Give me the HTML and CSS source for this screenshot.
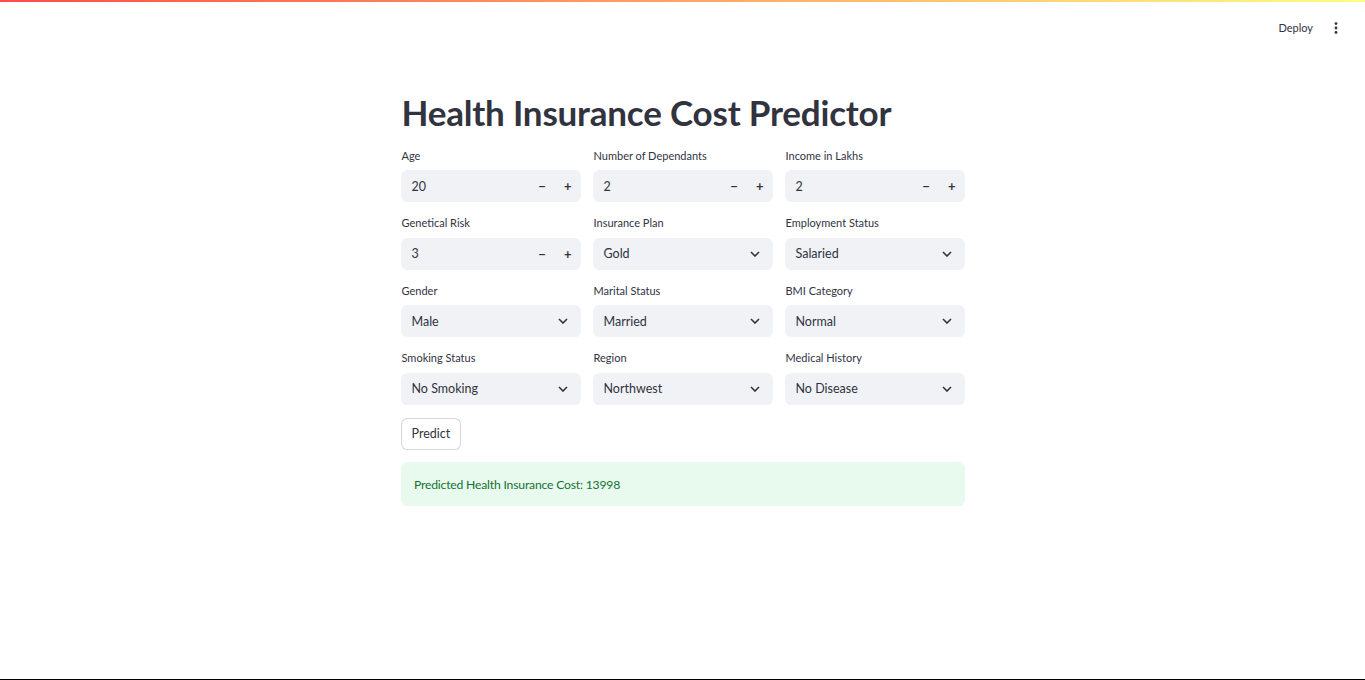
FILE: index.html
```html
<!DOCTYPE html>
<html lang="en">
<head>
<meta charset="utf-8">
<title>Health Insurance Cost Predictor</title>
<link rel="stylesheet" href="styles.css">
</head>
<body>
<div class="decoration"></div>
<header class="topbar">
  <button class="deploy">Deploy</button>
  <button class="menu" aria-label="Main menu">
    <svg width="4" height="12" viewBox="0 0 4 12"><circle cx="2" cy="1.6" r="1.4"/><circle cx="2" cy="6" r="1.4"/><circle cx="2" cy="10.4" r="1.4"/></svg>
  </button>
</header>
<main class="main">
  <h1 class="title">Health Insurance Cost Predictor</h1>
  <div class="grid">
    <div class="field">
      <label class="label">Age</label>
      <div class="box number"><span class="value">20</span><span class="step">&minus;</span><span class="step plus">+</span></div>
    </div>
    <div class="field">
      <label class="label">Number of Dependants</label>
      <div class="box number"><span class="value">2</span><span class="step">&minus;</span><span class="step plus">+</span></div>
    </div>
    <div class="field">
      <label class="label">Income in Lakhs</label>
      <div class="box number"><span class="value">2</span><span class="step">&minus;</span><span class="step plus">+</span></div>
    </div>

    <div class="field">
      <label class="label">Genetical Risk</label>
      <div class="box number"><span class="value">3</span><span class="step">&minus;</span><span class="step plus">+</span></div>
    </div>
    <div class="field">
      <label class="label">Insurance Plan</label>
      <div class="box select"><span class="value">Gold</span><svg class="chev" width="10" height="6" viewBox="0 0 10 6"><path d="M1 1l4 4 4-4"/></svg></div>
    </div>
    <div class="field">
      <label class="label">Employment Status</label>
      <div class="box select"><span class="value">Salaried</span><svg class="chev" width="10" height="6" viewBox="0 0 10 6"><path d="M1 1l4 4 4-4"/></svg></div>
    </div>

    <div class="field">
      <label class="label">Gender</label>
      <div class="box select"><span class="value">Male</span><svg class="chev" width="10" height="6" viewBox="0 0 10 6"><path d="M1 1l4 4 4-4"/></svg></div>
    </div>
    <div class="field">
      <label class="label">Marital Status</label>
      <div class="box select"><span class="value">Married</span><svg class="chev" width="10" height="6" viewBox="0 0 10 6"><path d="M1 1l4 4 4-4"/></svg></div>
    </div>
    <div class="field">
      <label class="label">BMI Category</label>
      <div class="box select"><span class="value">Normal</span><svg class="chev" width="10" height="6" viewBox="0 0 10 6"><path d="M1 1l4 4 4-4"/></svg></div>
    </div>

    <div class="field">
      <label class="label">Smoking Status</label>
      <div class="box select"><span class="value">No Smoking</span><svg class="chev" width="10" height="6" viewBox="0 0 10 6"><path d="M1 1l4 4 4-4"/></svg></div>
    </div>
    <div class="field">
      <label class="label">Region</label>
      <div class="box select"><span class="value">Northwest</span><svg class="chev" width="10" height="6" viewBox="0 0 10 6"><path d="M1 1l4 4 4-4"/></svg></div>
    </div>
    <div class="field">
      <label class="label">Medical History</label>
      <div class="box select"><span class="value">No Disease</span><svg class="chev" width="10" height="6" viewBox="0 0 10 6"><path d="M1 1l4 4 4-4"/></svg></div>
    </div>
  </div>
  <div class="actions"><button class="predict">Predict</button></div>
  <div class="success">Predicted Health Insurance Cost: 13998</div>
</main>
<div class="bottom-line"></div>
</body>
</html>
```

FILE: styles.css
```css
* { box-sizing: border-box; }

html, body {
  margin: 0;
  padding: 0;
  background: #ffffff;
  color: #31333f;
  font-family: "Lato", "Noto Sans", sans-serif;
}

.decoration {
  height: 2px;
  background: linear-gradient(90deg, #ff4b4b, #fffd80);
}

.topbar {
  height: 46px;
  display: flex;
  justify-content: flex-end;
  align-items: center;
  padding-right: 22px;
  gap: 9px;
  position: absolute;
  top: 2px;
  left: 0;
  right: 0;
}

.deploy {
  border: none;
  background: transparent;
  color: #31333f;
  font-family: inherit;
  font-size: 11px;
  padding: 4px 8px;
  margin-top: 5px;
  cursor: pointer;
}

.menu {
  border: none;
  background: transparent;
  padding: 4px 5px 4px 4px;
  display: flex;
  margin-top: 5px;
}
.menu svg { fill: #31333f; }

.main {
  width: 564px;
  margin: 0 auto;
  padding-top: 89px;
}

.title {
  margin: 0 0 0 1px;
  font-size: 35px;
  line-height: 42px;
  font-weight: 700;
  letter-spacing: -0.2px;
  color: #31333f;
  padding-bottom: 2px;
}

.grid {
  margin-top: 13px;
  display: grid;
  grid-template-columns: repeat(3, 1fr);
  column-gap: 12px;
  row-gap: 13.1px;
}

.field {
  display: flex;
  flex-direction: column;
}

.label {
  font-size: 11px;
  line-height: 16.5px;
  height: 16.5px;
  margin-bottom: 5.9px;
  padding-left: 1px;
  color: #31333f;
}

.box {
  height: 32px;
  background: #f0f2f6;
  border-radius: 6.4px;
  display: flex;
  align-items: center;
  font-size: 12.5px;
  color: #31333f;
}

.number { padding-left: 11px; }
.select { padding: 0 13px 0 11px; }

.value { flex: 1; }

.step {
  width: 25.6px;
  text-align: center;
  font-weight: 700;
  font-size: 13px;
}

.chev path {
  fill: none;
  stroke: #31333f;
  stroke-width: 1.6;
}

.actions {
  margin-top: 12.8px;
}

.predict {
  height: 32px;
  padding: 0 10px;
  border: 1px solid rgba(49, 51, 63, 0.2);
  border-radius: 6.4px;
  background: #ffffff;
  color: #31333f;
  font-family: inherit;
  font-size: 12.5px;
}

.success {
  margin-top: 12.4px;
  height: 44px;
  padding: 0 13.5px;
  display: flex;
  align-items: center;
  background: #e8f9ee;
  color: #177233;
  border-radius: 6.4px;
  font-size: 12.2px;
  letter-spacing: -0.2px;
}

.bottom-line {
  position: fixed;
  left: 0;
  right: 0;
  bottom: 0;
  height: 1px;
  background: #000000;
}
```
